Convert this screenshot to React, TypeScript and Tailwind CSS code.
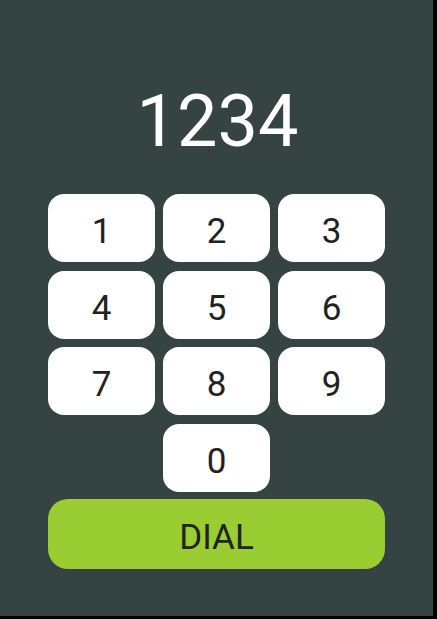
import React, { useState } from 'react';

const KEYS = ['1', '2', '3', '4', '5', '6', '7', '8', '9'];

export default function App() {
  const [number, setNumber] = useState('1234');

  const press = (d: string) => setNumber(n => n + d);

  return <div className="w-[437px] h-[619px] bg-black" style={{ fontFamily: 'Roboto, "Noto Sans", sans-serif' }}>
      <div className="w-[433px] h-[616px] bg-[#354343] border-t border-[#2c4955] flex flex-col pl-[48px] pr-[48px] pt-[85px]">
        <div className="text-center text-white text-[72px] leading-[72px] ml-[2px]">{number}</div>

        <div className="mt-[36px] grid grid-cols-3 gap-x-2 gap-y-[8.67px]">
          {KEYS.map(k => <button key={k} onClick={() => press(k)} className="h-[68px] rounded-2xl bg-white text-[#222222] text-[35px] leading-none pt-[7px] flex items-center justify-center">
              {k}
            </button>)}
          <button onClick={() => press('0')} className="col-start-2 h-[68px] rounded-2xl bg-white text-[#222222] text-[35px] leading-none pt-[7px] flex items-center justify-center">
            0
          </button>
        </div>

        <button className="mt-[7px] w-[337px] h-[70px] rounded-[20px] bg-[#9acd32] text-[#222222] text-[35px] leading-none pt-[8px] flex items-center justify-center">
          DIAL
        </button>
      </div>
    </div>;
}
